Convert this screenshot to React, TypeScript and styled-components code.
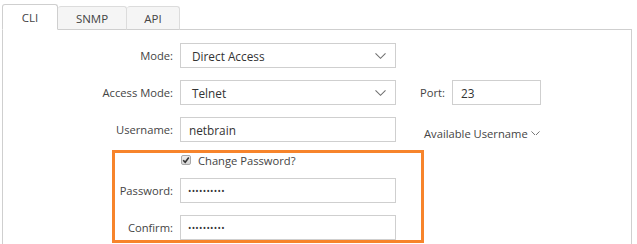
import styled, { createGlobalStyle } from 'styled-components';

const GlobalStyle = createGlobalStyle`
  body {
    margin: 0;
    background: #ffffff;
    font-family: 'Open Sans', 'Noto Sans', sans-serif;
    font-size: 11.2px;
    color: #333333;
  }
`;

const Page = styled.div`
  width: 637px;
  height: 244px;
  overflow: hidden;
  padding: 3px 0 0 2px;
  box-sizing: border-box;
`;

const TabBar = styled.div`
  display: flex;
  align-items: flex-end;
  height: 26px;
  position: relative;
  z-index: 1;
`;

const Tab = styled.div<{ $active?: boolean; $width: number }>`
  width: ${(p) => p.$width}px;
  height: ${(p) => (p.$active ? 26 : 24)}px;
  box-sizing: border-box;
  border: 1px solid ${(p) => (p.$active ? '#cfcfcf' : '#dcdcdc')};
  border-bottom: ${(p) => (p.$active ? '1px solid #ffffff' : '1px solid #cfcfcf')};
  border-left: ${(p) => (p.$active ? '1px solid #cfcfcf' : 'none')};
  border-radius: 3px 3px 0 0;
  background: ${(p) => (p.$active ? '#ffffff' : '#f5f5f5')};
  display: flex;
  align-items: center;
  justify-content: center;
  font-size: 11.5px;
  color: #444444;
  margin-bottom: -1px;
`;

const Panel = styled.div`
  position: relative;
  width: 630px;
  height: 230px;
  box-sizing: border-box;
  border: 1px solid #cfcfcf;
  padding-top: 13px;
`;

const Form = styled.div`
  display: flex;
  flex-direction: column;
  gap: 12px;
`;

const Row = styled.div<{ $height?: number }>`
  display: flex;
  align-items: center;
  height: ${(p) => p.$height ?? 25}px;
`;

const Label = styled.div`
  width: 177px;
  padding-right: 7px;
  box-sizing: border-box;
  text-align: right;
  font-size: 11.2px;
  color: #444444;
  flex-shrink: 0;
`;

const Field = styled.div`
  width: 216px;
  height: 25px;
  box-sizing: border-box;
  border: 1px solid #cfcfcf;
  background: #ffffff;
  position: relative;
  display: flex;
  align-items: center;
  padding-left: 11px;
  font-size: 11.8px;
  color: #333333;
`;

const TextInput = styled.input<{ $width?: number }>`
  width: ${(p) => p.$width ?? 216}px;
  height: 25px;
  box-sizing: border-box;
  border: 1px solid #cfcfcf;
  outline: none;
  padding: 0 0 0 8px;
  margin: 0;
  font-family: 'Open Sans', 'Noto Sans', sans-serif;
  font-size: 11.8px;
  color: #333333;
  background: #ffffff;
`;

const PasswordInput = styled(TextInput)`
  font-size: 9px;
  letter-spacing: 0.3px;
  padding-left: 7px;
`;

const Chevron = styled.svg`
  position: absolute;
  right: 9px;
  top: 50%;
  transform: translateY(-50%);
`;

const Side = styled.div<{ $gap: number }>`
  display: flex;
  align-items: center;
  margin-left: ${(p) => p.$gap}px;
  gap: 7px;
  font-size: 11.2px;
  color: #444444;
`;

const Dropdown = styled.div`
  display: flex;
  align-items: center;
  gap: 3px;
  margin-top: 7px;
  color: #444444;
  font-size: 11.2px;
`;

const CheckRow = styled.div`
  display: flex;
  align-items: center;
  gap: 7px;
  margin-left: 178px;
  font-size: 11.2px;
  color: #444444;
`;

const CheckBox = styled.span`
  width: 10px;
  height: 10px;
  box-sizing: border-box;
  border: 1px solid #a8a8a8;
  border-radius: 2px;
  background: linear-gradient(#eeeeee, #d6d6d6);
  display: flex;
  align-items: center;
  justify-content: center;
`;

const Highlight = styled.div`
  position: absolute;
  left: 109px;
  top: 120px;
  width: 312px;
  height: 93px;
  box-sizing: border-box;
  border: 3px solid #f7842b;
  pointer-events: none;
`;

function ChevronDown({ size = 10 }: { size?: number }) {
  return (
    <svg width={size} height={size * 0.55} viewBox="0 0 10 5.5">
      <polyline
        points="0.5,0.5 5,5 9.5,0.5"
        fill="none"
        stroke="#666666"
        strokeWidth="1"
      />
    </svg>
  );
}

function Select({ value }: { value: string }) {
  return (
    <Field>
      {value}
      <Chevron width="11" height="7" viewBox="0 0 11 7">
        <polyline
          points="0.5,0.8 5.5,5.8 10.5,0.8"
          fill="none"
          stroke="#707070"
          strokeWidth="1.1"
        />
      </Chevron>
    </Field>
  );
}

export default function App() {
  return (
    <Page>
      <GlobalStyle />
      <TabBar>
        <Tab $active $width={56}>CLI</Tab>
        <Tab $width={69}>SNMP</Tab>
        <Tab $width={53}>API</Tab>
      </TabBar>
      <Panel>
        <Form>
          <Row>
            <Label>Mode:</Label>
            <Select value="Direct Access" />
          </Row>
          <Row>
            <Label>Access Mode:</Label>
            <Select value="Telnet" />
            <Side $gap={24}>
              Port:
              <TextInput $width={89} defaultValue="23" />
            </Side>
          </Row>
          <Row>
            <Label>Username:</Label>
            <TextInput defaultValue="netbrain" />
            <Side $gap={28}>
              <Dropdown>
                Available Username
                <ChevronDown size={9} />
              </Dropdown>
            </Side>
          </Row>
          <Row $height={12}>
            <CheckRow>
              <CheckBox>
                <svg width="8" height="8" viewBox="0 0 8 8">
                  <polyline
                    points="1.2,4.2 3.2,6.2 6.8,1.5"
                    fill="none"
                    stroke="#333333"
                    strokeWidth="1.6"
                  />
                </svg>
              </CheckBox>
              Change Password?
            </CheckRow>
          </Row>
          <Row>
            <Label>Password:</Label>
            <PasswordInput type="password" defaultValue="1234567890" />
          </Row>
          <Row>
            <Label>Confirm:</Label>
            <PasswordInput type="password" defaultValue="1234567890" />
          </Row>
        </Form>
        <Highlight />
      </Panel>
    </Page>
  );
}
